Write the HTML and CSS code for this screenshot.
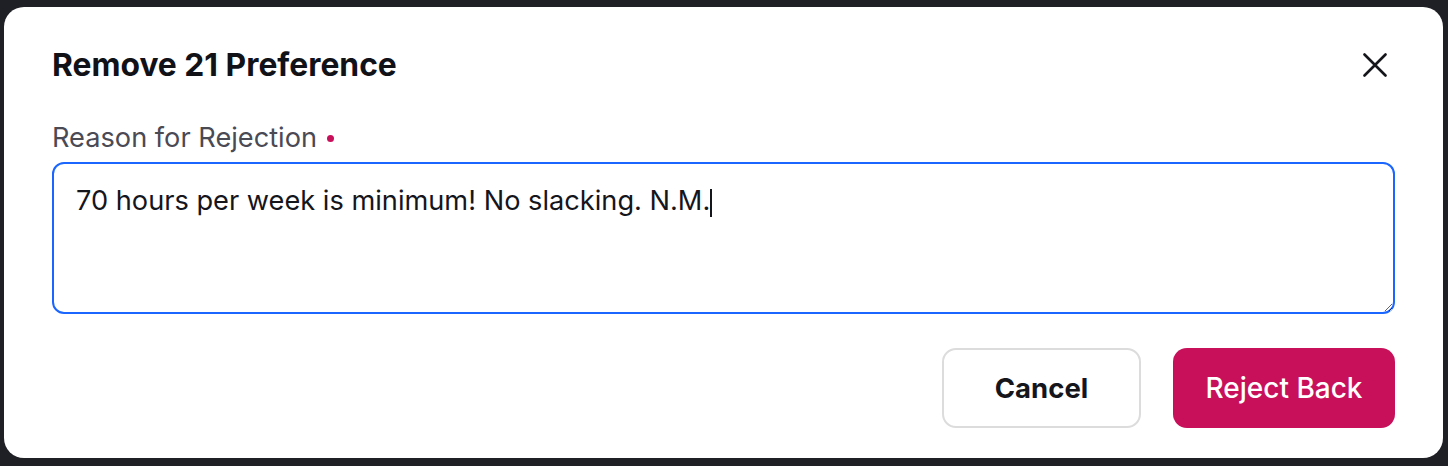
FILE: index.html
```html
<!DOCTYPE html>
<html lang="en">
<head>
  <meta charset="UTF-8" />
  <meta name="viewport" content="width=device-width, initial-scale=1.0"/>
  <title>Remove Preference</title>
  <link rel="stylesheet" href="styles.css">
</head>
<body>
  <div class="modal">
    <div class="modal-header">
      <h2>Remove 21 Preference</h2>
      <button class="close-btn" aria-label="Close">
        <svg width="24" height="24" viewBox="0 0 24 24">
          <path d="M1.5 1.5L22.5 22.5M22.5 1.5L1.5 22.5" stroke="#15151c" stroke-width="2.6" stroke-linecap="round"/>
        </svg>
      </button>
    </div>

    <label class="field-label" for="reason">Reason for Rejection <span class="required"></span></label>
    <div class="reason-wrap">
      <textarea id="reason" class="reason-box">70 hours per week is minimum! No slacking. N.M.</textarea>
      <span class="caret"></span>
    </div>

    <div class="button-group">
      <button class="btn btn-cancel">Cancel</button>
      <button class="btn btn-reject">Reject Back</button>
    </div>
  </div>
</body>
</html>
```

FILE: styles.css
```css
* {
  box-sizing: border-box;
}

body {
  margin: 0;
  padding: 7px 5px 8px 4px;
  background: #1f1f26;
  font-family: Inter, 'Noto Sans', sans-serif;
  height: 466px;
}

.modal {
  background: white;
  border-radius: 20px;
  height: 451px;
  padding: 39px 48px 0 48px;
  display: flex;
  flex-direction: column;
}

.modal-header {
  display: flex;
  justify-content: space-between;
  align-items: center;
}

h2 {
  margin: 0;
  font-size: 31.8px;
  line-height: 38px;
  font-weight: 700;
  color: #111118;
}

.close-btn {
  background: none;
  border: none;
  padding: 0;
  margin-right: 8px;
  width: 24px;
  height: 24px;
  cursor: pointer;
}

.field-label {
  margin-top: 38px;
  font-size: 27.2px;
  line-height: 32px;
  color: #4a4a55;
  display: flex;
  align-items: center;
  gap: 10px;
}

.required {
  width: 7px;
  height: 7px;
  border-radius: 50%;
  background: #c8105a;
  display: inline-block;
}

.reason-wrap {
  position: relative;
  margin-top: 8px;
}

.reason-box {
  display: block;
  height: 152px;
  width: 100%;
  border: 2px solid #1a66ff;
  border-radius: 12px;
  padding: 20px 22px;
  font-family: Inter, 'Noto Sans', sans-serif;
  font-size: 27.2px;
  line-height: 34px;
  color: #15151c;
  resize: vertical;
  outline: none;
}

/* text cursor at the end of the typed reason */
.caret {
  position: absolute;
  left: 658px;
  top: 27px;
  width: 2px;
  height: 28px;
  background: #15151c;
}

.button-group {
  display: flex;
  justify-content: flex-end;
  gap: 32px;
  margin-top: 34px;
}

.btn {
  height: 80px;
  border-radius: 14px;
  font-family: Inter, 'Noto Sans', sans-serif;
  cursor: pointer;
}

.btn-cancel {
  width: 199px;
  background: white;
  border: 2px solid #dcdcdc;
  color: #15151c;
  font-size: 27.5px;
  font-weight: 700;
}

.btn-reject {
  width: 222px;
  background: #c8105a;
  border: none;
  color: white;
  font-size: 28px;
  font-weight: 500;
}
```
